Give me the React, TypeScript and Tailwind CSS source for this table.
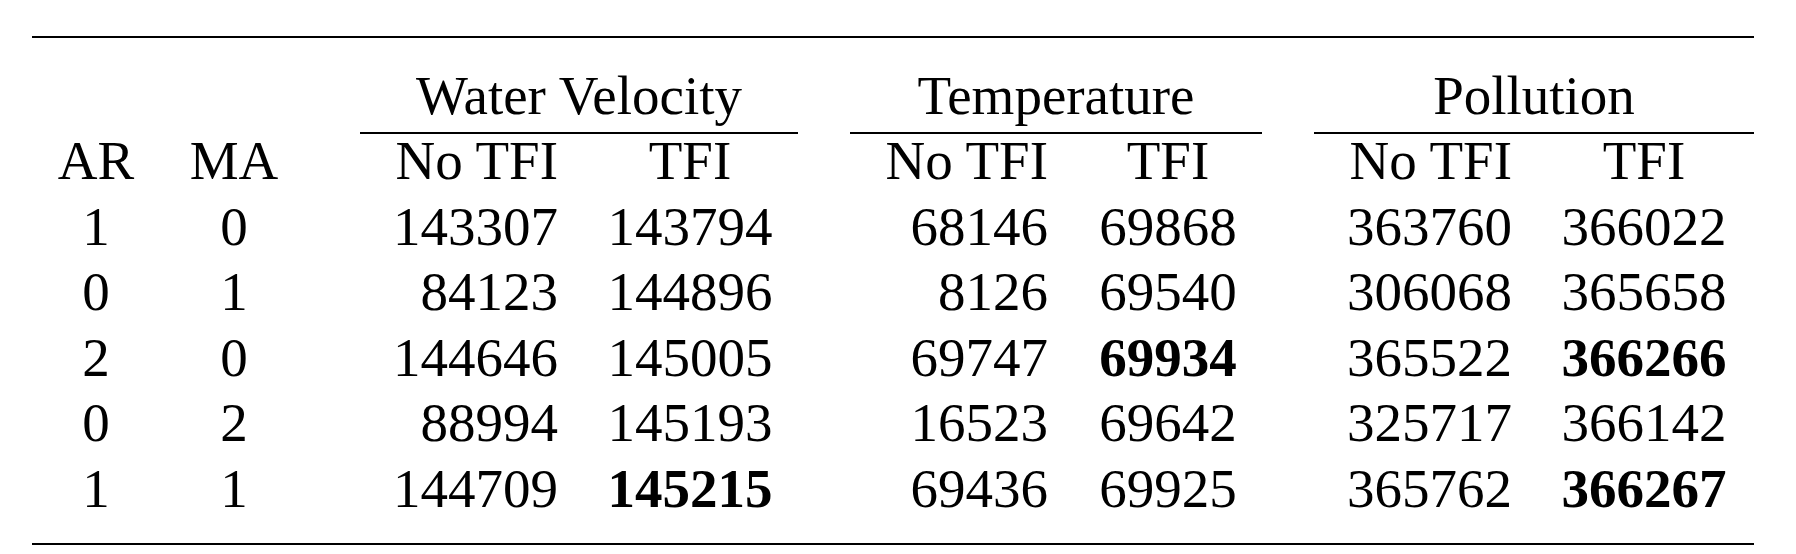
const rows: { ar: number; ma: number; cells: { v: string; b?: boolean }[] }[] = [
  { ar: 1, ma: 0, cells: [{ v: "143307" }, { v: "143794" }, { v: "68146" }, { v: "69868" }, { v: "363760" }, { v: "366022" }] },
  { ar: 0, ma: 1, cells: [{ v: "84123" }, { v: "144896" }, { v: "8126" }, { v: "69540" }, { v: "306068" }, { v: "365658" }] },
  { ar: 2, ma: 0, cells: [{ v: "144646" }, { v: "145005" }, { v: "69747" }, { v: "69934", b: true }, { v: "365522" }, { v: "366266", b: true }] },
  { ar: 0, ma: 2, cells: [{ v: "88994" }, { v: "145193" }, { v: "16523" }, { v: "69642" }, { v: "325717" }, { v: "366142" }] },
  { ar: 1, ma: 1, cells: [{ v: "144709" }, { v: "145215", b: true }, { v: "69436" }, { v: "69925" }, { v: "365762" }, { v: "366267", b: true }] },
];

// alignment per value column: No TFI right, TFI centered
const colCls = ["text-right", "text-center", "text-right", "text-center", "text-right pr-[22px]", "text-center"];

const groups = [
  { name: "Water Velocity", cls: "ml-[52px] mr-[24px]" },
  { name: "Temperature", cls: "ml-[28px] mr-[26px]" },
  { name: "Pollution", cls: "ml-[26px] mr-0" },
];

export default function App() {
  return (
    <div className="min-h-[554px] w-[1796px] bg-white pl-[32px] pt-[36px] font-['Liberation_Serif',serif] text-[55px] text-black">
      <div className="w-[1722px]">
        <div className="h-[2px] bg-black" />
        <div className="grid grid-cols-[128px_148px_250px_264px_226px_240px_246px_220px]">
          {/* group headers */}
          <div className="col-span-2" />
          {groups.map((g) => (
            <div key={g.name} className="col-span-2 pt-[24.7px]">
              <div className={`${g.cls} border-b-2 border-black pb-[4.3px] text-center leading-[65.5px]`}>{g.name}</div>
            </div>
          ))}

          {/* column headers */}
          <div className="mb-[5.2px] text-center leading-[54px]">AR</div>
          <div className="mb-[5.2px] text-center leading-[54px]">MA</div>
          {["No TFI", "TFI", "No TFI", "TFI", "No TFI", "TFI"].map((h, i) => (
            <div key={i} className={`mb-[5.2px] leading-[54px] ${colCls[i]}`}>{h}</div>
          ))}

          {rows.map((r, ri) => (
            <div key={ri} className="contents">
              <div className="text-center leading-[65.5px]">{r.ar}</div>
              <div className="text-center leading-[65.5px]">{r.ma}</div>
              {r.cells.map((c, i) => (
                <div key={i} className={`leading-[65.5px] ${colCls[i]} ${c.b ? "font-bold" : ""}`}>{c.v}</div>
              ))}
            </div>
          ))}
        </div>
        <div className="mt-[21.8px] h-[2px] bg-black" />
      </div>
    </div>
  );
}
